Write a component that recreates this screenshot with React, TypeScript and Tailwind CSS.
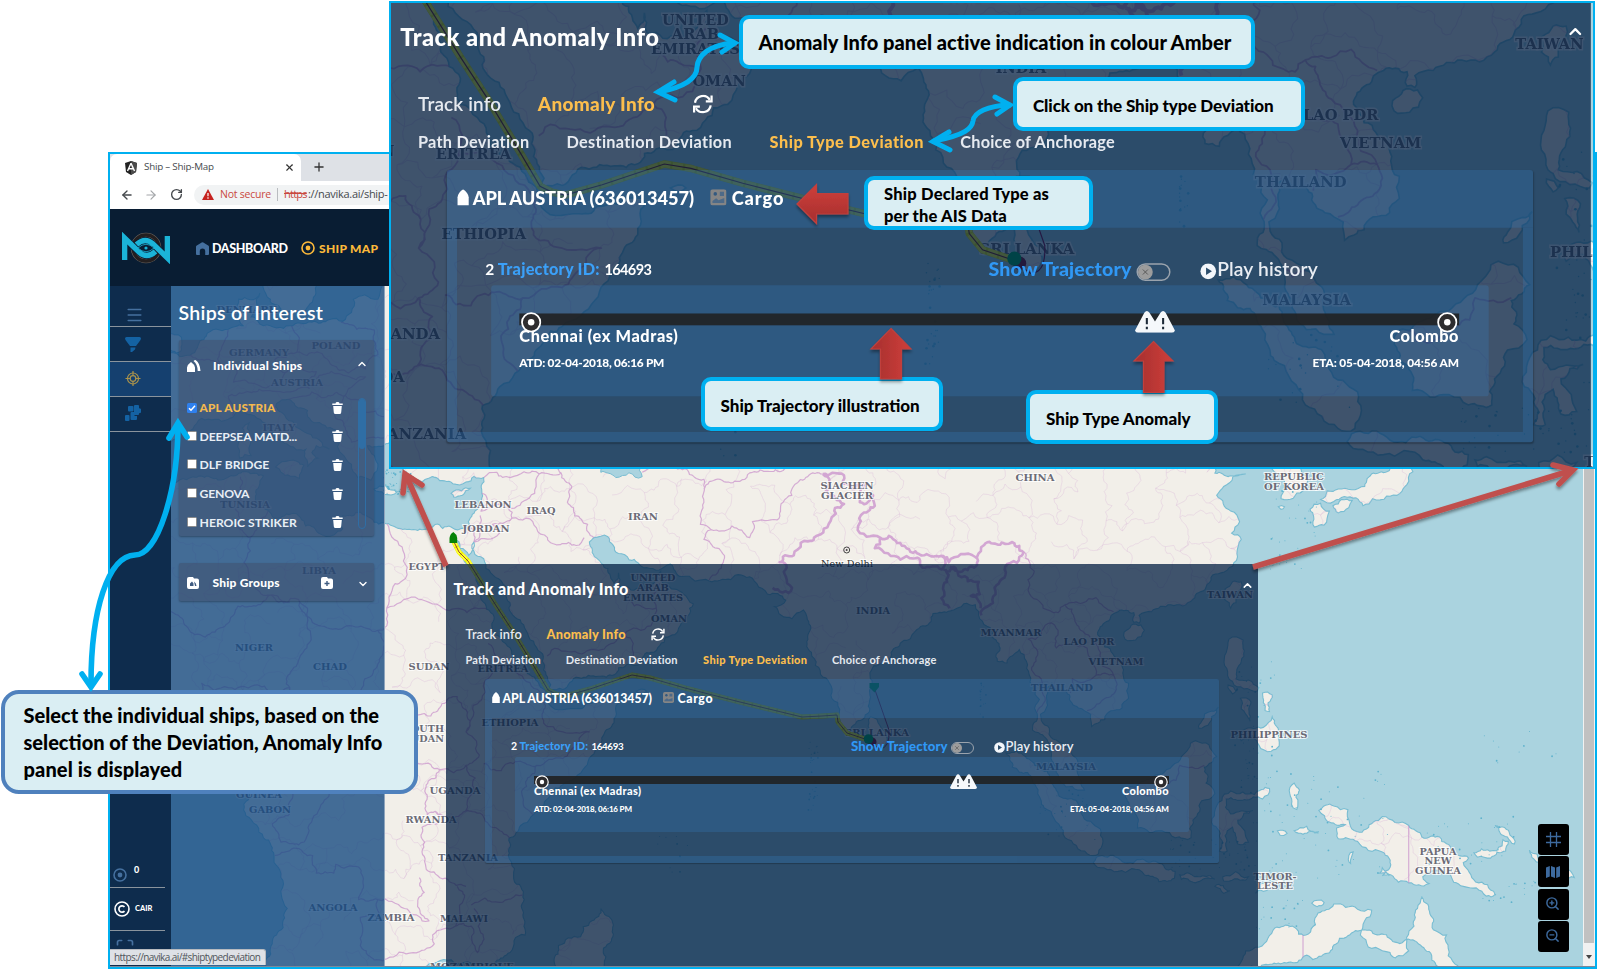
import { useId, useLayoutEffect, useRef, type ReactNode } from "react";
import {
  ArrowLeft,
  ArrowRight,
  ChevronDown,
  ChevronUp,
  Maximize,
  Menu,
  Plus,
  RotateCw,
  X,
  ZoomIn,
  ZoomOut,
} from "lucide-react";

/* ---------- text that is spaced out to a given width ---------- */

function Fit({ w, className = "", children }: { w: number; className?: string; children: string }) {
  const ref = useRef<HTMLSpanElement>(null);
  useLayoutEffect(() => {
    const el = ref.current;
    if (!el) return;
    el.style.letterSpacing = "0px";
    const natural = el.offsetWidth;
    el.style.letterSpacing = `${(w - natural) / Math.max(1, children.length - 1)}px`;
  }, [w, children]);
  return (
    <span className={`flex shrink-0 whitespace-nowrap ${className}`} style={{ width: w }}>
      <span ref={ref}>{children}</span>
    </span>
  );
}

/* ---------- map geometry (longitude, latitude) ---------- */

const px = (lon: number) => 166.5 + 8.81 * lon;
const py = (lat: number) => 802.5 - 8.83 * lat;

function random(seed: number) {
  let s = seed;
  return () => {
    s = (s * 16807) % 2147483647;
    return s / 2147483647;
  };
}

type Pt = [number, number];

function parse(src: string): Pt[] {
  return src
    .trim()
    .split(/\s+/)
    .map((p) => p.split(",").map(Number) as Pt);
}

function rough(points: Pt[], seed: number, amp = 0.2, min = 4): string {
  const rnd = random(seed);
  const out: string[] = [];
  const split = (a: Pt, b: Pt) => {
    const dx = b[0] - a[0];
    const dy = b[1] - a[1];
    const len = Math.hypot(dx, dy);
    if (len < min || len > 400) {
      out.push(`L${b[0].toFixed(1)} ${b[1].toFixed(1)}`);
      return;
    }
    const k = (rnd() - 0.5) * 2 * amp;
    const m: Pt = [(a[0] + b[0]) / 2 - dy * k, (a[1] + b[1]) / 2 + dx * k];
    split(a, m);
    split(m, b);
  };
  out.push(`M${points[0][0].toFixed(1)} ${points[0][1].toFixed(1)}`);
  for (let i = 1; i < points.length; i++) split(points[i - 1], points[i]);
  return out.join("");
}

const geo = (src: string, seed: number, closed: boolean, amp = 0.2) => {
  const pts = parse(src).map(([a, b]) => [px(a), py(b)] as Pt);
  if (closed) pts.push(pts[0]);
  return rough(pts, seed, amp) + (closed ? "Z" : "");
};

const MAINLAND =
  "-5,48 1.5,50.5 3.5,51.5 4.5,52.8 7,53.6 8.7,54 8.2,55.5 8.2,57 10.6,57.7 10.3,56.2 9.6,55 11,54 14,54 16.5,54.4 18.5,54.7 20,54.5 21,55.5 21.2,57 22.5,57.5 24,57 24.5,60 60,62 160,62 130,43 127.5,40 129.4,37 129,35.3 126.5,34.4 126.5,37 125,38 125,39.8 121.5,39 122,40.5 118,39 119,37.3 122.5,37.2 120,35.8 119.2,34.8 120.8,33 121.8,31.8 120.9,30.5 122,29.8 121.5,28.2 119.7,26 118,24.4 116.5,23 114,22.4 111.8,21.6 110.4,21.2 110.4,20.3 109.8,20.4 109.8,21.5 108,21.6 106.7,20.5 105.7,19 106.5,17.6 108.3,16 109.2,13.5 109.2,11.8 107.2,10.4 106.5,9.4 105,8.6 104.9,10 103.5,10.7 102.5,12.2 100.9,12.8 100.5,13.5 99.9,13 99.9,11.8 99.2,10 99.3,9.3 100.2,8.4 100.6,7.2 102,6.3 103.4,4.8 103.4,3.3 104.2,1.4 103.4,1.4 101.3,2.9 100.4,5 100.3,6.5 99,7.9 98.3,8.2 98.7,10.3 98.5,13 97.6,16 96.8,17.3 95.4,15.8 94.3,16 94.5,18 93.5,19.8 92.3,20.8 91.8,22.4 90.5,22.5 89,21.7 87,21.4 86.8,20.5 85,19.4 82.3,16.7 80.3,15.5 80.2,13.2 79.8,11.5 79.8,10.3 79,9.4 78.2,8.9 77.5,8.1 76.5,9 75.5,11.8 74.5,14.2 73.2,17 72.8,19 72.7,21 72.3,21.8 71,20.8 69,22.2 70.3,22.9 68.2,23.6 67,24.8 66.5,25.4 61.6,25.1 58.5,25.6 57.2,27 54.5,26.6 52.5,27.5 51.3,28.2 50.1,30.1 48.5,30 48,29.5 48.8,27.7 50.1,26.5 50.8,24.8 51.3,26 51.5,24.5 54,24.1 56.1,26.2 56.5,24.5 58.7,23.6 59.8,22.5 58.5,20.5 57.7,19 56,17.8 55,17 52.2,15.6 49,14.3 45,12.8 43.5,12.7 42.8,15 42.5,17 40.8,19.5 39.1,21.5 38.5,23.7 36.8,26 35,28.1 34.9,29.5 34.3,28 33.3,28.8 32.6,30 32.5,29.4 33.8,27.3 35.5,24 35.7,23 37.2,21 37.2,19 38.5,18 39.5,15.5 41.2,14.5 43,12.7 43.3,11.5 44.5,10.5 48,11.2 51.2,11.8 50.8,9.5 49,6.5 47.5,4 45,2 42.5,-0.5 40.2,-2.6 38.8,-6 39.5,-7.5 39.5,-9 40.6,-11 40.7,-15 39,-17 36,-19.5 11.8,-19.5 12,-16 13.7,-12 13.2,-8.8 12.2,-6 11,-4 9,-1.5 9.4,1 9.7,3.5 8.8,4.6 6.2,4.3 4.5,6.3 1,6 -4,5 -6,36 0,36 3,36.9 10,37.3 11,37 10.5,35.8 10.1,34 11.2,33.2 15.2,32.3 15.8,31.3 19,30.3 20,31 20,32.5 22,32.9 23.2,32.2 25.2,31.6 29,30.9 30.5,31.5 32.3,31.2 34.3,31.3 35,33 35.8,35 36,36.8 34,36.3 32.5,36.1 30.6,36.8 29,36.3 27.4,37 26.3,39.3 26.2,40.1 26,40.8 23.8,40.3 22.8,40.4 24,38 23.2,36.5 21.7,36.8 21,38.3 19.4,40.3 19.5,42 17,43 14.5,45.2 13.5,45.6 12.4,44.8 13.6,43.5 16,41.8 18.5,40 17,40.4 16.5,39.6 17.2,39 16,38 15.8,40 12.3,41.7 10.3,43.5 8.8,44.4 7,43.4 4,43.5 3,42.3 0.5,40.8 -0.3,39 -5,36.5";

const ISLANDS = [
  "-4,50 1.4,51 1.7,52.7 0.2,53.3 -2,56 -4,57",
  "11.5,60 11,58.8 12.7,56.3 13,55.4 14.3,55.5 16.3,56.5 17,58.5 19,60",
  "8.3,39 9.6,39.3 9.6,41 8.3,41",
  "8.7,41.5 9.4,41.7 9.4,43 8.6,42.4",
  "12.4,38 15.6,38.2 15.1,36.7 13,37.4",
  "23.5,35.5 26.2,35.2 24.7,34.9",
  "32.3,35 33.5,35.3 34.5,35.6 33.6,34.8 32.6,34.6",
  "79.9,9.7 81,8.7 81.8,7.3 81.4,6.3 80.4,5.95 79.9,7 79.8,8.3",
  "53.3,12.6 54.5,12.6 54,12.3",
  "49.3,-12 50.5,-15.7 49.6,-16.5 48.5,-20 43.5,-21 44,-18 44.5,-16.2 47,-15.2 48.3,-13.4",
  "95.3,5.6 97.5,5.2 100.3,2.6 103,0.3 103.8,-1.2 106,-3 105.8,-5.8 104.5,-5.8 102,-4 100.4,-1 98.7,1.8 96,4",
  "105.2,-6.8 106.2,-6 108.5,-6.7 110.8,-6.4 112.7,-6.9 114.5,-7.8 114.4,-8.6 111,-8.2 108,-7.8 106.4,-7.4",
  "115,-8.2 116.7,-8.4 118.5,-8.3 119,-8.7 117,-9 115.2,-8.7",
  "119.9,-8.4 122.8,-8.4 122.5,-8.8 120,-8.9",
  "123.6,-10.3 125,-9 127.2,-8.4 126,-9.3",
  "119,-9.5 120.7,-10 120,-10.3",
  "109,1.5 110,1.7 111.3,2.6 113,3.2 115.2,5.2 116.8,7 119.2,5.2 117.8,4 118,2.2 119,1 117.5,0.2 116.5,-2 116.3,-4 114.5,-4 113,-3.2 110.2,-2.9 109.9,-1 109,0.4",
  "119.8,0.2 120.8,1.3 123.5,0.9 125.2,1.6 124.4,0.4 120.3,0.4 120.8,-1.3 123.3,-0.9 121.6,-2 122.4,-3.2 122.8,-4.5 121.6,-4.7 121,-2.8 120.4,-3.2 120.4,-5.5 119.5,-5.5 119.6,-3.5 118.8,-2.6",
  "127.5,1 128,2.2 128.6,1.4 128.2,0.6 128.3,-0.8 127.7,-0.2",
  "128,-3.2 130.8,-3.3 129,-3.6",
  "126.1,-3.2 127.2,-3.5 126.4,-3.7",
  "130.8,-0.9 132.5,-0.4 134.1,-0.8 134.3,-2.4 135.1,-3.3 137,-2.2 138,-1.6 141,-2.6 144.5,-3.9 146,-5.5 147.8,-6.3 147.2,-6.8 148.6,-9 150.8,-10.4 149.8,-10.6 147.2,-9.5 145.5,-8 143.8,-7.7 142.6,-8.4 143.3,-9.2 141,-9.1 139,-8.2 138,-8.3 138.9,-7.3 138,-5.6 135.2,-4.4 133,-4.1 132.8,-2.9 133.8,-2.5 132,-2.2",
  "137.7,-8 138.8,-8.3 138,-7.4",
  "134.2,-6 134.7,-5.6 134.4,-6.9",
  "148.4,-5.7 150.2,-5.5 151.6,-4.9 151.7,-4.2 152.3,-4.4 152,-5.5 150.3,-6.3 148.8,-6.2",
  "150.8,-2.6 152.5,-3.7 153,-4.7 152.2,-3.9",
  "154.7,-5.4 155.9,-6.8 155.2,-6.4",
  "157,-7.4 159.8,-8.5 157.5,-8",
  "120.2,-20 119,-19.5 122,-18 122.5,-16.8 124,-16.4 125.8,-14.2 127.8,-14 128.5,-14.9 129.6,-14.9 130.7,-12.5 132.5,-11.5 135.2,-12.1 136.8,-12.2 136,-13.4 135.5,-15 138,-16.8 139.5,-17.6 141,-16.8 141.6,-14 142,-12 142.5,-10.7 143.4,-12.6 143.8,-14.4 145.3,-15 146,-18 148,-20",
  "130,-11.4 131.4,-11.3 130.6,-11.8",
  "120.6,18.5 122.2,18.4 122,16 121.4,14 124,13 123.8,12.6 121,13.7 120.6,14 120.1,15.5 120.3,17",
  "122,7 122.2,8.2 124.5,8.5 125.5,9.7 126.4,8 126.3,6.4 125.4,5.8 124,6.5 123.4,7.5",
  "121.9,11.8 123.1,11.4 123,9.2 122.5,10 122,10.6",
  "124.4,12.4 125.5,12.2 125.2,10.3 124.7,10.4 124.5,11.3",
  "117.2,8.4 119.4,10.8 119.2,10.2",
  "120.5,13.3 121.4,12.6 121,12.3",
  "120.1,23 121,25 122,25 121.4,23.5 120.8,22",
  "108.7,19.3 110.6,20.1 111,19.5 110,18.4 108.8,18.5",
  "129.8,33.2 131,33.9 132,33 131.4,31.4 130.3,31.2 130.2,32.4",
  "132.4,33.6 134.6,34.2 134.2,33.4 133,32.8",
  "131,34.3 133,35.5 136,35.8 137,37.3 138.8,37.6 141,39 140.8,36 140,35 138.5,34.7 136.9,34.4 135.8,33.6 135,34.5 132.5,34.1",
  "126.2,33.5 126.9,33.5 126.5,33.2",
];

const BORDERS = [
  "36,36.8 39,36.8 42.3,37.2 44.8,37.3 46,35.8 45.5,34 47.8,31.5 48.5,30",
  "35.8,35 36.4,34.4 35.7,33 38.8,33.4 41.2,34.5 42.3,37.2",
  "35.6,32.5 35.5,31.5 35,29.5 37.8,30.5 37,31.5 39.2,32.2 38.8,33.4",
  "39.2,32.2 42,31.1 44.7,29.2 46.5,29.1 47.4,30",
  "34.2,31.3 34.9,29.5",
  "25,31.6 25,20",
  "25,22 31.4,22 36.8,22",
  "25,20 24,19.5 24,15.7 22.5,14 22,12.6 23.5,10 26,7 27.5,5 30,4.3 31,3.7",
  "24,10 27,9.6 30,9.8 33,12 34,10.5 34,8 35.5,5.4 34,4.2 31,3.7",
  "36.5,18 37,15 36.2,12.5 34.8,11 34,8",
  "37,15 40,14.5 42.4,12.5 43,11 42.8,9 45,8 48,8 45,5 42,4.2 38,3.6 36,4.4",
  "42,4.2 41,2.8 41,-0.8 41.6,-1.7",
  "34,4.2 34.8,1 33.9,-1 37.6,-3 39.2,-4.7",
  "33.9,-1 30.5,-1 29.6,-1.4 29.6,0.6 31,3.7",
  "30.5,-1 30.8,-2.4 29,-2.8 29.3,-4.5 30.8,-8.3 32.9,-9.4 34,-9.5",
  "34.6,-11.6 37.8,-11.3 40.4,-10.5",
  "28.7,-8.5 28.5,-11.8 29.8,-13.4 29,-13.4 27,-12 24,-11 24,-13 22,-13 22,-16.2 25,-17.7",
  "33,-9.5 33.3,-12.5 32.8,-14 30.2,-15 30.4,-16 28,-17 25,-17.7",
  "32.8,-14 34.6,-14 35.3,-17 35.8,-16 34.9,-12",
  "12.3,-6 16.6,-6 17,-8 19,-8 19.2,-7 21.8,-7.3 21.8,-11 24,-11",
  "9.8,2.2 13.3,2.2 16,2.2 18.5,4.5 19,5 22.5,4 27.5,5",
  "13.3,2.2 13.8,-1.5 12,-2.4 13,-4.5 15,-4.8 16.2,-2.5 17.8,0 18.5,4.5",
  "8.6,4.8 10,7 12,7.5 14.2,11.5 14,13 10,13.3 7,13 4,13.5 3.6,11.7 2.7,6.4",
  "14.2,10 15.5,7.7 19,9 22.5,11",
  "14,13 13.6,14 15.5,17 16,22 15,23 24,19.5",
  "15,23 11.8,23.5 5.5,19.3 3.2,19 0,21.5",
  "11.8,23.5 10,24.5 9.5,30 11.5,33",
  "9.5,30 7.8,33.2 8.4,36.9",
  "14,22.7 11.8,23.5",
  "43.2,16.6 44.5,17.4 47.5,17 52,19 55,20 55.6,22 52.5,22.9 51.5,24",
  "52,19 53,16.6",
  "55.6,22 56,24.8",
  "54,37.4 57,38.2 61,36.6 61,34 60.6,31.5 61.8,30.9 61,29.8 63.2,27.2 61.6,25.2",
  "61.8,30.9 66.2,30 66.5,31.8 69.3,32 70,34 71.3,36 74.5,37.2",
  "61,35.5 64.5,36.4 66.5,37.4 70,37.6 71.5,38",
  "44.8,37.3 44.5,39 47,39.2 48.8,38.4",
  "97.5,28.3 97.8,24 98.8,23 99.5,22 101.2,21.5 102,22.4 104,22.6 105.5,23.2 107.5,21.6",
  "100.1,20.3 97.8,18.5 98.7,16 98.2,15 99.4,12.5 98.8,10.2",
  "100.1,20.3 101.2,19.5 101,17.5 102.5,18 104.5,17.5 105.5,14.4 107.5,14.4 106,17 104,19.4 103,21 102,22.4",
  "105.5,14.4 102.8,14 102.6,12.4",
  "107.5,14.4 107.5,12.3 106,11.3 104.5,10.4",
  "100.2,6.5 101,5.8 102,6.3",
  "109.6,2 110.5,0.9 112.5,1.4 114.6,2.5 115,4.2 117.8,4.2",
  "125,-8.9 125.2,-9.5",
  "6.2,49.5 6,51 7,53.5",
  "14.2,54 14.8,51 12.3,50.2 13.5,48.7 13,47.5 9.6,47.5 7.6,47.6 8,49 6.2,49.5 2.5,51",
  "14.8,51 18.8,49.5 22.6,49.1 24,50.7 23.6,53.5 19.8,54.4",
  "13.5,48.7 17,48.8 16.2,46.9 13.7,46.5 10.5,46.8 7,46 7.5,43.8",
  "17,48 20.5,48.3 22.6,48.2 20.3,46.1 16.5,46.5 13.7,45.6",
  "20.3,46.1 19,44.9 19.2,43.5 20.5,42 21,40.8 24.7,41.3",
  "20.3,46.1 22.6,44.2 24.7,43.7",
];

const STRAIGHT = ["141,-2.6 141,-9.1", "129,-15 129,-20", "138,-16.8 138,-20"];

const THICK = [
  "74.5,37.2 77.8,35.5 79.4,36.2 78.6,34.8 78.7,34 80.2,34.8 80.4,33.6 78.8,32.5 78.5,31.3 81,30 80.4,28.8 83.3,27.5 85.8,26.6 88,26.4 88.2,27.9 86,28 84,28.8 82,30.2 81,30",
  "74.5,37.2 74.8,35.2 76.9,33.8 75.5,32.3 74.6,31 73.5,30 71.2,28 69.6,27.2 70.3,25.6 71,24.3 68.8,24.3",
  "88,27.9 88.8,27.2 91.8,27.8 92,26.9 88.9,26.7",
  "92,27.8 94.4,29.2 96,29.5 97.3,28.3 95.2,26.7 94.2,24.6 93.2,22.2 92.5,21.2",
  "88.2,26.4 88.2,24.6 88.9,22",
  "88.4,26.4 89.9,25.7 92.2,25 92.3,23.6 91.3,23.4 92.4,22",
];

const LAND = [MAINLAND, ...ISLANDS].map((s, i) => geo(s, 97 + i * 31, true, 0.2)).join("");
const BORDER_D =
  BORDERS.map((s, i) => geo(s, 411 + i * 17, false, 0.2)).join("") + STRAIGHT.map((s) => geo(s, 5, false, 0)).join("");
const THICK_D = THICK.map((s, i) => geo(s, 733 + i * 13, false, 0.28)).join("");
const CASPIAN = geo("49,38.4 49.3,37.4 51,36.8 54,36.9 53.9,40 49,40", 55, true);

const PROVINCES = (() => {
  const rnd = random(4242);
  const step = 27;
  const cols = 54;
  const rows = 26;
  const v: Pt[][] = [];
  for (let r = 0; r <= rows; r++) {
    v.push([]);
    for (let c = 0; c <= cols; c++) v[r].push([160 + c * step + (rnd() - 0.5) * 22, 280 + r * step + (rnd() - 0.5) * 22]);
  }
  let d = "";
  for (let r = 0; r < rows; r++)
    for (let c = 0; c < cols; c++) {
      const australia = r > 21 && c > 36;
      if (rnd() > 0.36 && !australia) d += rough([v[r][c], v[r][c + 1]], 900 + r * 61 + c, 0.26, 5);
      if (rnd() > 0.36 && !australia) d += rough([v[r][c], v[r + 1][c]], 5900 + r * 61 + c, 0.26, 5);
    }
  return d;
})();

const SPECKS: Pt[] = (() => {
  const rnd = random(777);
  const areas: [number, number, number, number, number][] = [
    [1250, 770, 140, 110, 60],
    [1270, 490, 50, 80, 30],
    [1235, 660, 40, 130, 45],
    [1425, 815, 90, 50, 25],
    [384, 470, 30, 25, 50],
    [808, 740, 10, 70, 30],
    [980, 680, 8, 40, 16],
    [1480, 725, 90, 40, 10],
    [1480, 880, 80, 25, 20],
    [1160, 840, 90, 30, 40],
    [1040, 790, 60, 50, 24],
    [1255, 900, 60, 30, 20],
    [640, 835, 50, 40, 10],
  ];
  return areas.flatMap(([x, y, w, h, n]) => Array.from({ length: n }, () => [x + rnd() * w, y + rnd() * h] as Pt));
})();

const LABELS: [string, number, number, number][] = [
  ["DENMARK", 247, 309, 61],
  ["POLAND", 336, 345, 49],
  ["GERMANY", 259, 352, 60],
  ["AUSTRIA", 297, 382, 52],
  ["ITALY", 279, 427, 33],
  ["TUNISIA", 245, 504, 50],
  ["LIBYA", 319, 570, 34],
  ["NIGER", 254, 647, 38],
  ["CHAD", 330, 666, 34],
  ["GUINEA", 259, 794, 46],
  ["GABON", 270, 809, 42],
  ["ANGOLA", 333, 907, 49],
  ["ZAMBIA", 391, 917, 47],
  ["RWANDA", 431, 819, 51],
  ["UGANDA", 455, 790, 51],
  ["SOUTH", 424, 728, 40],
  ["SUDAN", 424, 738, 40],
  ["SUDAN", 429, 666, 41],
  ["EGYPT", 427, 566, 37],
  ["JORDAN", 486, 528, 47],
  ["LEBANON", 483, 504, 57],
  ["IRAQ", 541, 510, 29],
  ["IRAN", 643, 516, 30],
  ["SIACHEN", 847, 485, 53],
  ["GLACIER", 847, 495, 52],
  ["CHINA", 1035, 477, 39],
  ["UNITED", 653, 577.5, 45],
  ["ARAB", 653, 587, 32],
  ["EMIRATES", 653, 597, 60],
  ["OMAN", 669, 618.5, 36],
  ["INDIA", 873, 610, 34],
  ["ERITREA", 503, 668, 51],
  ["ETHIOPIA", 510, 722, 57],
  ["SRI LANKA", 877, 732.5, 64],
  ["MYANMAR", 1011, 632, 61],
  ["LAO PDR", 1089, 641.5, 51],
  ["VIETNAM", 1116, 661, 55],
  ["THAILAND", 1062, 687, 62],
  ["MALAYSIA", 1066, 766.5, 60],
  ["TAIWAN", 1230, 594, 46],
  ["PHILIPPINES", 1269, 734, 77],
  ["REPUBLIC", 1294, 476, 60],
  ["OF KOREA", 1294, 486, 60],
  ["PAPUA", 1438, 851, 37],
  ["NEW", 1438, 860, 27],
  ["GUINEA", 1438, 870, 46],
  ["TIMOR-", 1275, 876, 43],
  ["LESTE", 1275, 885, 36],
  ["TANZANIA", 468, 857.5, 60],
  ["MALAWI", 464, 918.5, 48],
  ["MOZAMBIQUE", 472, 966, 84],
];

const TRACK =
  "M453 540L459 552L468 561L495 604L512 630L535 668L548 690L556 694L565 696L590 689L632 675L650 678L685 688L740 702L802 717L822 716L837 715L838 722L847 733L868 740";

function WorldMap() {
  const id = useId();
  return (
    <svg className="block h-[970px] w-[1613px]" viewBox="0 0 1613 970">
      <defs>
        <clipPath id={id}>
          <path d={LAND} />
        </clipPath>
      </defs>
      <rect width="1613" height="970" fill="#aad3df" />
      <path d={LAND} fill="#f2efe9" stroke="#79bdd2" strokeWidth="1.1" />
      <g clipPath={`url(#${id})`} fill="none" strokeLinejoin="round">
        <path d={PROVINCES} stroke="#d9b3d9" strokeWidth="0.7" opacity="0.45" />
        <path d={BORDER_D} stroke="#cb95cc" strokeWidth="1.2" opacity="0.75" />
        <path d={THICK_D} stroke="#cf9fd0" strokeWidth="2.6" opacity="0.9" />
      </g>
      <path d={CASPIAN} fill="#aad3df" stroke="#79bdd2" />
      <g fill="#5fb2cc">
        {SPECKS.map(([x, y], i) => (
          <circle key={i} cx={x} cy={y} r={i % 3 ? 0.5 : 0.9} />
        ))}
      </g>
      <g
        fontFamily="'DejaVu Serif', serif"
        fontWeight="700"
        fontSize="9.6"
        fill="#6b6b76"
        stroke="#ffffff"
        strokeOpacity="0.75"
        strokeWidth="2"
        paintOrder="stroke"
        textAnchor="middle"
      >
        {LABELS.map(([t, x, y, w]) => (
          <text key={`${t}${x}${y}`} x={x} y={y + 3.5} textLength={w} lengthAdjust="spacingAndGlyphs">
            {t}
          </text>
        ))}
        <text x="847" y="566.5" fontWeight="400" fill="#333333" textLength="52">
          New Delhi
        </text>
      </g>
      <circle cx="846.7" cy="550" r="3" fill="none" stroke="#444" />
      <circle cx="846.7" cy="550" r="1" fill="#444" />
      <path d={TRACK} fill="none" stroke="#e6ee00" strokeWidth="5" strokeLinejoin="round" />
      <path d={TRACK} fill="none" stroke="#ffff30" strokeWidth="4.4" strokeDasharray="7 1.5" />
      <path d={TRACK} fill="none" stroke="#7a1f1f" strokeWidth="0.8" />
      <path d="M874 687L889 730Q890 748 880 749L868 741" fill="none" stroke="#8a1048" strokeWidth="0.8" />
      <path d="M449.5 543v-5q.5-4 3.8-6q3.3 2 3.9 6v5z" fill="#078307" />
      <circle cx="872" cy="742" r="4.5" fill="#8a1030" />
      <circle cx="868.5" cy="739" r="4.8" fill="#00b058" />
      <path d="M869.5 683h9.500v4l-4.500 5.500l-5-5z" fill="#00b058" />
    </svg>
  );
}

/* ---------- small drawings ---------- */

function ShipGlyph() {
  return (
    <svg className="h-[11px] w-2 shrink-0" viewBox="0 0 8 11">
      <path d="M.2 11V5.500Q.6 2.200 4 0Q7.400 2.200 7.800 5.500V11z" fill="#fff" />
    </svg>
  );
}

function RefreshGlyph() {
  return (
    <svg className="h-[13px] w-[14px] shrink-0" viewBox="0 0 14 13" fill="none" stroke="#fff" strokeWidth="1.5">
      <path d="M1.700 5.600A5.400 5.400 0 0 1 11.700 3.700M12.300 7.400A5.400 5.400 0 0 1 2.300 9.300" />
      <path d="M12.900.8V4.700H9M1.100 12.200V8.300H5" />
    </svg>
  );
}

function TargetGlyph({ className, ring, dot }: { className: string; ring: string; dot: string }) {
  return (
    <svg className={`shrink-0 ${className}`} viewBox="0 0 14 14">
      <circle cx="7" cy="7" r="6" fill="none" stroke={ring} strokeWidth="1.6" />
      <circle cx="7" cy="7" r="2.4" fill={dot} />
    </svg>
  );
}

function TrashGlyph() {
  return (
    <svg className="mb-[1px] h-3 w-[11px] shrink-0" viewBox="0 0 11 12" fill="#fff">
      <path d="M3.500 1.400Q3.500 0 5.500 0T7.500 1.400H10.700V3.100H.3V1.400zM1.200 3.900h8.600L9.200 10.500Q9 12 7.600 12H3.400Q2 12 1.800 10.500z" />
    </svg>
  );
}

function StopGlyph() {
  return (
    <svg className="h-[14px] w-[14px]" viewBox="0 0 14 14">
      <circle cx="7" cy="7" r="6.2" fill="#2e2d2f" stroke="#fff" strokeWidth="1.2" />
      <circle cx="7" cy="7" r="2.2" fill="#fff" />
    </svg>
  );
}

/* ---------- Track and Anomaly panel ---------- */

function AnomalyPanel() {
  return (
    <section className="flex h-[402px] w-[812px] flex-col bg-[rgba(0,28,65,0.74)] pl-[7.500px] font-[Lato,sans-serif] text-white">
      <div className="flex h-[50px] items-center justify-between pr-[4.500px]">
        <Fit w={175} className="text-[16px] font-black">
          Track and Anomaly Info
        </Fit>
        <ChevronUp className="mb-[7px] h-[13px] w-[13px]" strokeWidth={2.8} />
      </div>
      <div className="mt-[11.500px] flex h-[18px] items-center gap-[25px] pl-[12px] text-[12.800px]">
        <Fit w={56} className="font-semibold text-[#e6eaf0]">
          Track info
        </Fit>
        <Fit w={79.5} className="font-black text-[#fcbe4d]">
          Anomaly Info
        </Fit>
        <RefreshGlyph />
      </div>
      <div className="mt-[8px] flex h-[18px] items-center gap-[24.800px] pl-[12px] text-[11px] font-bold text-[#e6eaf0]">
        <Fit w={75.5}>Path Deviation</Fit>
        <Fit w={112.5}>Destination Deviation</Fit>
        <Fit w={104} className="font-black text-[#fcbe4d]">
          Ship Type Deviation
        </Fit>
        <Fit w={104}>Choice of Anchorage</Fit>
      </div>
      <div className="mt-[9.500px] ml-[31.500px] w-[734px] rounded-[2px] shadow-[0_1px_1px_rgba(0,0,0,0.25)]">
        <div className="flex h-[39px] items-center rounded-t-[2px] bg-[rgba(55,145,225,0.2)] pt-[1.500px] pl-[7px] text-[12.300px] font-black">
          <span className="mb-[3px] flex">
            <ShipGlyph />
          </span>
          <Fit w={150} className="ml-[2.500px]">
            APL AUSTRIA (636013457)
          </Fit>
          <svg className="mb-[4px] ml-[10.500px] h-[11px] w-[11px] shrink-0" viewBox="0 0 11 11">
            <rect width="11" height="11" rx="1.8" fill="#858585" />
            <circle cx="3.4" cy="3.2" r="1.2" fill="#33597f" />
            <path d="M6.500 1.800h2.800v2.800H6.500zM1.500 9.300V8L4 6.200l1.600 1.300L9.500 6v3.300z" fill="#4d6a88" />
          </svg>
          <Fit w={35.5} className="ml-[3.500px]">
            Cargo
          </Fit>
        </div>
        <div className="h-[145px] rounded-b-[2px] border-x-[7.500px] border-b-[7px] border-[rgba(55,145,225,0.2)]">
          <div className="flex h-[39px] items-end pb-[2.500px] pl-[19px]">
            <div className="flex h-[16px] w-[340px] items-center text-[10.500px]">
              <Fit w={6} className="font-bold">
                2
              </Fit>
              <Fit w={69} className="ml-[2.500px] text-[11px] font-black text-[#3ba0f8]">
                Trajectory ID:
              </Fit>
              <Fit w={32} className="ml-[3px] text-[9.800px] font-bold">
                164693
              </Fit>
            </div>
            <div className="flex h-[16px] items-center text-[13px]">
              <Fit w={96.5} className="text-[13.200px] font-black text-[#3098f5]">
                Show Trajectory
              </Fit>
              <span className="mt-[2px] ml-[3.500px] flex h-[12px] w-[23px] items-center rounded-full border border-[#9aa3ad]">
                <span className="flex h-[10px] w-[10px] items-center justify-center rounded-full bg-[#9c9c9c]">
                  <X className="h-[6px] w-[6px] text-[#555]" strokeWidth={2.5} />
                </span>
              </span>
              <svg className="mt-[1px] ml-[20px] h-[11px] w-[11px] shrink-0" viewBox="0 0 11 11">
                <circle cx="5.5" cy="5.5" r="5.3" fill="#f3f6fa" />
                <path d="M4 3l4 2.500L4 8z" fill="#2c4d6b" />
              </svg>
              <Fit w={68} className="ml-[0.500px] font-semibold text-[#e9edf3]">
                Play history
              </Fit>
            </div>
          </div>
          <div className="mr-[23px] ml-[23px] h-[75px] rounded-[2px] bg-[rgba(55,145,225,0.2)] pt-[19px] pr-[20px] pl-[19px]">
            <div className="relative h-[8px] bg-[rgba(32,32,32,0.88)]">
              <span className="absolute top-[-1.500px] left-[1px]">
                <StopGlyph />
              </span>
              <span className="absolute top-[-1.500px] right-[1px]">
                <StopGlyph />
              </span>
              <svg className="absolute top-[-2.500px] left-[415.500px] h-[15px] w-[27px]" viewBox="0 0 27 15">
                <path
                  d="M0 13.500L6.300 1.500Q8 -.8 9.800 1.500L13.500 7.500L17.200 1.500Q19 -.8 20.700 1.500L27 13.500Q26.500 15 25 15H2Q.5 15 0 13.500z"
                  fill="#f5f8fb"
                />
                <path d="M8 5v4.300M8 11v1.700M19 5v4.300M19 11v1.700" stroke="#1d2a38" strokeWidth="1.4" />
              </svg>
            </div>
            <div className="mt-[0.500px] flex h-[14px] items-center justify-between text-[11px] font-black">
              <Fit w={107.5}>Chennai (ex Madras)</Fit>
              <Fit w={47}>Colombo</Fit>
            </div>
            <div className="mt-[4.500px] flex h-[11px] items-center justify-between text-[8px] font-black">
              <Fit w={98}>ATD: 02-04-2018, 06:16 PM</Fit>
              <Fit w={99}>ETA: 05-04-2018, 04:56 AM</Fit>
            </div>
          </div>
        </div>
      </div>
    </section>
  );
}

/* ---------- browser window ---------- */

function BrowserBar() {
  return (
    <div className="w-full shrink-0 font-['Open_Sans','Noto_Sans',sans-serif] text-[#45494d]">
      <div className="flex h-[27px] bg-[#dee1e6]">
        <div className="flex w-[191px] items-center rounded-t-[7px] bg-white pl-[15px]">
          <svg className="h-[14px] w-3" viewBox="0 0 12 14">
            <path d="M6 0l6 2-1 9-5 3-5-3L0 2z" fill="#222" />
            <path d="M6 0l6 2-1 9-5 3z" fill="#4b4b4b" />
            <path d="M6 2.200L2.500 10M6 2.200L9.500 10M4 7.800h4" stroke="#fff" strokeWidth="1.4" fill="none" />
          </svg>
          <Fit w={70} className="mb-px ml-[7px] text-[9.800px]">
            Ship – Ship-Map
          </Fit>
          <X className="ml-[70px] h-[11px] w-[11px] text-[#333]" strokeWidth={2.5} />
        </div>
        <Plus className="mt-[6px] ml-[11px] h-[14px] w-[14px] text-[#333]" strokeWidth={2.2} />
      </div>
      <div className="flex h-[28px] items-center bg-white pl-[10px] text-[11px]">
        <ArrowLeft className="mb-px h-[14px] w-[14px]" strokeWidth={2.3} />
        <ArrowRight className="mb-px ml-[10px] h-[14px] w-[14px] text-[#a3a6a9]" strokeWidth={2} />
        <RotateCw className="mb-px ml-[12px] h-[13px] w-[13px]" strokeWidth={2.5} />
        <div className="mb-px ml-[11px] flex h-[20px] w-[300px] items-center rounded-full bg-[#f1f3f4] pl-[8px]">
          <svg className="h-[11px] w-3" viewBox="0 0 12 11">
            <path d="M6 0l6 11H0z" fill="#c5221f" />
            <path d="M6 4v3.300M6 8.300v1.400" stroke="#fff" strokeWidth="1.2" />
          </svg>
          <Fit w={51} className="ml-[6px] text-[10.500px] text-[#c9493f]">
            Not secure
          </Fit>
          <span className="mx-[6px] h-[13px] w-px bg-[#b9bcc0]" />
          <Fit w={24} className="text-[#c9493f] line-through">
            https
          </Fit>
          <Fit w={80}>://navika.ai/ship-</Fit>
        </div>
      </div>
    </div>
  );
}

function AppHeader() {
  return (
    <div className="flex h-[77px] w-full shrink-0 items-center bg-[#091d33] pl-[12px] font-[Lato,sans-serif] text-[12.500px] font-black text-white">
      <svg className="h-[32px] w-[48px] shrink-0" viewBox="0 0 48 32" fill="none">
        <circle cx="24" cy="16" r="13" stroke="#6a6560" strokeWidth="4.6" />
        <circle cx="24" cy="16" r="13" stroke="#231f20" strokeWidth="3.4" />
        <path d="M2.600 28V6.500L17.500 20.500Q25 27 33.500 19.500" stroke="#091d33" strokeWidth="6.8" />
        <path d="M45.400 4V25.500L30.500 11.500Q23 5 14.500 12.500" stroke="#091d33" strokeWidth="6.8" />
        <path d="M2.600 28V6L17.500 20.500Q25 27 33.500 19.500" stroke="#1bb4d8" strokeWidth="5.4" />
        <path d="M45.400 4V26L30.500 11.500Q23 5 14.500 12.500" stroke="#1bb4d8" strokeWidth="5.4" />
        <path d="M16 16q8-7.500 16 0q-8 7.500-16 0z" fill="#091d33" stroke="#1bb4d8" strokeWidth=".8" />
        <circle cx="24" cy="16" r="1.6" fill="#1bb4d8" />
      </svg>
      <svg className="mt-[2px] ml-[26px] h-[13px] w-[13px] shrink-0" viewBox="0 0 13 13">
        <path d="M0 4.800Q0 4 .8 3.500L5.700.4Q6.500 0 7.300.4l4.900 3.100Q13 4 13 4.800V12Q13 13 12 13H9.200V8.800Q9 6.600 6.500 6.600T3.800 8.800V13H1Q0 13 0 12z" fill="#45709f" />
      </svg>
      <Fit w={76} className="mt-[3px] ml-[3px]">
        DASHBOARD
      </Fit>
      <TargetGlyph className="mt-[1px] ml-[13px] h-[14px] w-[14px]" ring="#fcb93a" dot="#fcb93a" />
      <Fit w={59} className="mt-[3px] ml-[4px] text-[12px] text-[#fcb93a]">
        SHIP MAP
      </Fit>
    </div>
  );
}

function RailItem({ active, h, children }: { active?: boolean; h: string; children: ReactNode }) {
  return (
    <div
      className={`flex items-center border-b border-[#8a949d] pl-[15px] text-[#45709f] ${h} ${active ? "bg-[#15406f]" : ""}`}
    >
      {children}
    </div>
  );
}

function Rail() {
  return (
    <nav className="flex h-full w-[60.500px] shrink-0 flex-col bg-[#0e2c4d] font-[Lato,sans-serif]">
      <RailItem h="h-[41px] pt-[17px]">
        <Menu className="h-[20px] w-[19px]" strokeWidth={1.8} />
      </RailItem>
      <RailItem h="h-[35px]">
        <svg className="h-[15px] w-4" viewBox="0 0 16 15" fill="#1462a3">
          <path d="M1.500 0h13Q16 0 16 1.500L15.500 3 11 9H5L.5 3 0 1.500Q0 0 1.500 0zM5.500 10.500h5L10 12.500 7 15H5.500z" />
        </svg>
      </RailItem>
      <RailItem h="h-[35px]" active>
        <svg className="mb-[2px] h-[15px] w-4" viewBox="0 0 15 15" fill="none" stroke="#a9924b" strokeWidth="1.2">
          <circle cx="7.5" cy="7.5" r="5.5" />
          <circle cx="7.5" cy="7.5" r="2.8" />
          <path d="M7.500 0v5M7.500 10v5M0 7.500h5M10 7.500h5" />
        </svg>
      </RailItem>
      <RailItem h="h-[35px]">
        <svg className="mb-[2px] h-4 w-4" viewBox="0 0 16 16" fill="#1462a3">
          <rect x="3" y="1" width="5.5" height="5.5" rx="1" />
          <rect x="0" y="10" width="4.5" height="6" rx="1" />
          <path d="M9 1Q9 0 10 0h3Q14 0 14 1v2.200a2.200 2.200 0 1 1 0 5v1Q14 10 13 10h-3Q9 10 9 9zM5.500 8Q5.500 7 6.500 7H9.500v4H12v3q0 1-1 1H6.500q-1 0-1-1z" />
        </svg>
      </RailItem>
      <div className="flex-1" />
      <div className="flex h-[25px] w-[55px] items-start border-b border-[#8a949d] pl-[3px]">
        <TargetGlyph className="mt-[5px] h-[14px] w-[14px]" ring="#45709f" dot="#45709f" />
        <span className="ml-[7px] text-[9px] font-black text-white">0</span>
      </div>
      <div className="flex h-[43px] w-[55px] items-center border-b border-[#8a949d] pl-[4px] text-white">
        <svg className="h-4 w-4 shrink-0" viewBox="0 0 16 16" fill="none" stroke="#fff">
          <circle cx="8" cy="8" r="7" strokeWidth="1.6" />
          <path d="M10.500 5.900a3.200 3.200 0 1 0 0 4.200" strokeWidth="1.7" />
        </svg>
        <Fit w={17} className="ml-[5px] text-[7.500px] font-black">
          CAIR
        </Fit>
      </div>
      <div className="h-[36px] pt-[7px] pl-[5px] text-[#45709f]">
        <Maximize className="h-[20px] w-[20px]" strokeWidth={2} />
      </div>
    </nav>
  );
}

const SHIPS: [string, number, boolean][] = [
  ["APL AUSTRIA", 76, true],
  ["DEEPSEA MATD...", 98, false],
  ["DLF BRIDGE", 70, false],
  ["GENOVA", 50, false],
  ["HEROIC STRIKER", 97, false],
];

function ShipsPanel() {
  return (
    <aside className="h-full w-[214.500px] shrink-0 border-r border-[#8fa5bd] bg-[rgba(18,70,127,0.78)] px-[8px] pt-[9px] font-[Lato,sans-serif] text-white">
      <Fit w={144} className="h-[35px] items-center text-[19.500px] font-semibold">
        Ships of Interest
      </Fit>
      <div className="mt-[10px] h-[196px] w-[195px] rounded-[2px] bg-[rgba(62,66,88,0.35)] shadow-[0_1px_2px_rgba(0,0,0,0.3)]">
        <div className="flex h-[51px] items-center pl-[8px]">
          <svg className="h-3 w-[14px] shrink-0" viewBox="0 0 14 12" fill="#fff">
            <path d="M0 12V7.500Q.5 4.500 4 2Q7.500 4.500 8 7.500V12zM6.500 1Q7.500 0 8.500 0Q13 3 13.500 11h-2.800Q10.500 4 6.500 1z" />
          </svg>
          <Fit w={89} className="ml-[12.500px] text-[12px] font-black">
            Individual Ships
          </Fit>
          <ChevronUp className="mb-[4px] ml-[54px] h-[12px] w-[12px]" strokeWidth={2.8} />
        </div>
        <div className="flex">
          <ul className="w-[179px] pt-[3px]">
            {SHIPS.map(([name, w, on]) => (
              <li key={name} className="flex h-[28.600px] items-center pl-[8px]">
                {on ? (
                  <svg className="mb-px h-[10px] w-[10px] shrink-0" viewBox="0 0 10 10">
                    <rect width="10" height="10" rx="1.5" fill="#2f80ed" />
                    <path d="M2 5.200l2 2L8 2.800" stroke="#fff" strokeWidth="1.5" fill="none" />
                  </svg>
                ) : (
                  <span className="mb-[2px] h-[10px] w-[10px] shrink-0 rounded-[1.500px] border border-[#8b8b8b] bg-white" />
                )}
                <span className="ml-[3px] w-[132.500px]">
                  <Fit w={w} className={on ? "text-[11.800px] font-black text-[#f3b84f]" : "text-[12.200px] font-bold text-[#e8eef5]"}>
                    {name}
                  </Fit>
                </span>
                <TrashGlyph />
              </li>
            ))}
          </ul>
          <div className="mt-[7px] h-[131px] w-[8px] rounded-full border border-[#2f6ea5]">
            <div className="h-[50px] rounded-full bg-[#2f6ea5]" />
          </div>
        </div>
      </div>
      <div className="mt-[27px] flex h-[38px] w-[195px] items-center rounded-[2px] bg-[rgba(62,66,88,0.35)] pt-px pl-[8px] shadow-[0_1px_2px_rgba(0,0,0,0.3)]">
        <svg className="h-3 w-3 shrink-0" viewBox="0 0 12 12">
          <path d="M2 0h4l1 1.500h3Q12 1.500 12 3.500v6.500Q12 12 10 12H2Q0 12 0 10V2Q0 0 2 0z" fill="#fff" />
          <path d="M3 9V6.500l2-2 1.500 2V9zM7 4.500q2.500 1.500 2.500 4.500H8z" fill="#3f5b80" />
        </svg>
        <Fit w={67} className="ml-[14px] text-[12px] font-black">
          Ship Groups
        </Fit>
        <svg className="ml-[41px] h-3 w-3 shrink-0" viewBox="0 0 12 12">
          <path d="M2 0h4l1 1.500h3Q12 1.500 12 3.500v6.500Q12 12 10 12H2Q0 12 0 10V2Q0 0 2 0z" fill="#fff" />
          <path d="M6 4v5M3.500 6.500h5" stroke="#3f5b80" strokeWidth="1.4" />
        </svg>
        <ChevronDown className="mt-[2px] ml-[24px] h-[12px] w-[12px]" strokeWidth={2.8} />
      </div>
    </aside>
  );
}

function MapTools() {
  const box = "flex h-[31px] w-[31px] items-center justify-center rounded-[3px] bg-black text-[#3d6a9e]";
  return (
    <div className="flex flex-col gap-[1.300px]">
      <span className={box}>
        <svg className="h-[15px] w-[15px]" viewBox="0 0 15 15" stroke="currentColor" strokeWidth="1.3">
          <path d="M4.500 0v15M10.500 0v15M0 4.500h15M0 10.500h15" />
        </svg>
      </span>
      <span className={box}>
        <svg className="h-3 w-[14px]" viewBox="0 0 14 12" fill="currentColor">
          <path d="M0 1.500L3.800 0v10.500L0 12zM5 0l4 1.500V12l-4-1.500zM10.200 1.500L14 0v10.500L10.200 12z" />
        </svg>
      </span>
      <span className={box}>
        <ZoomIn className="mr-[2px] mb-[2px] h-[15px] w-[15px]" strokeWidth={2.3} />
      </span>
      <span className={box}>
        <ZoomOut className="mr-[2px] mb-[2px] h-[15px] w-[15px]" strokeWidth={2.3} />
      </span>
    </div>
  );
}

function BrowserWindow() {
  return (
    <div className="relative flex h-[817px] w-[1489px] flex-col overflow-hidden border-2 border-[#00b0f0] bg-white">
      <BrowserBar />
      <AppHeader />
      <div className="relative min-h-0 flex-1 overflow-hidden">
        <div className="absolute top-[-286px] left-[-110px]">
          <WorldMap />
        </div>
        <div className="relative flex h-full">
          <Rail />
          <ShipsPanel />
          <div className="flex min-w-0 flex-1 items-end pl-[61px]">
            <div className="mb-px">
              <AnomalyPanel />
            </div>
            <div className="mb-[15px] ml-[279.500px]">
              <MapTools />
            </div>
          </div>
          <div className="flex w-[12px] shrink-0 flex-col items-center bg-[#f1f1f1]">
            <div className="h-[657px] w-[10px] bg-[#c1c1c1]" />
            <svg className="mt-[12px] h-[4px] w-[6px]" viewBox="0 0 6 4">
              <path d="M0 0h6L3 4z" fill="#444" />
            </svg>
          </div>
        </div>
        <div className="absolute bottom-[2px] left-0 flex h-[16px] w-[156px] items-center rounded-tr-[3px] border-t border-r border-[#b7babf] bg-[#dee1e6] pl-[4px] font-['Open_Sans','Noto_Sans',sans-serif] text-[10px] text-[#50555a]">
          <Fit w={147}>https://navika.ai/#shiptypedeviation</Fit>
        </div>
        <div className="absolute bottom-0 left-0 h-px w-full bg-[#7d8797]" />
      </div>
    </div>
  );
}

/* ---------- enlarged view and annotations ---------- */

function Magnified() {
  return (
    <div className="relative h-[468px] w-[1206px] overflow-hidden border-2 border-[#00b0f0]">
      <div className="absolute top-[-838px] left-[-662px] h-[970px] w-[1613px] origin-top-left scale-[1.480]">
        <WorldMap />
        <div className="absolute top-[564px] left-[446px]">
          <AnomalyPanel />
        </div>
      </div>
    </div>
  );
}

function Callout({ className, children }: { className: string; children: ReactNode }) {
  return (
    <div
      className={`absolute flex flex-col justify-center border-4 bg-[#daeef3] font-[Lato,sans-serif] font-black text-black ${className}`}
    >
      {children}
    </div>
  );
}

function Arrows() {
  return (
    <svg className="pointer-events-none absolute top-0 left-0 h-[970px] w-[1613px]" viewBox="0 0 1613 970" fill="none">
      <defs>
        <linearGradient id="redH" x1="0" x2="1" y1="0" y2="0">
          <stop offset="0" stopColor="#a52f2e" />
          <stop offset="1" stopColor="#cf3f3b" />
        </linearGradient>
        <linearGradient id="redV" x1="0" x2="0" y1="0" y2="1">
          <stop offset="0" stopColor="#cf3f3b" />
          <stop offset="1" stopColor="#a52f2e" />
        </linearGradient>
        <filter id="soft" x="-20%" y="-20%" width="140%" height="150%">
          <feDropShadow dx="0" dy="2.5" stdDeviation="1.8" floodOpacity="0.4" />
        </filter>
      </defs>
      <g stroke="#00b0f0" strokeWidth="5.6" strokeLinecap="round" strokeLinejoin="miter">
        <path d="M178 424C178 490 158 555 135 555C108 556 91 610 91 684" />
        <path d="M169 438L178 423L187 437M82 674L91 687L100 674" />
        <path d="M659 92C690 86 697 76 697 67C698 56 708 45 734 43" strokeWidth="5" />
        <path d="M674 82L658 92L675 100M720 35L735 43L722 52" strokeWidth="5" />
        <path d="M934 141C966 135 972 128 973 121C974 112 988 106 1009 105" strokeWidth="5" />
        <path d="M949 132L933 141.500L950 150M995 97L1010 105L997 114" strokeWidth="5" />
      </g>
      <g stroke="#c0504d" strokeWidth="5.6" filter="url(#soft)">
        <path d="M446 566L406 475M1253 567L1573 470" />
        <path d="M403 493L405 474L422 485M1553 465L1573 470L1559 484" strokeLinecap="round" />
      </g>
      <g stroke="#c0403d" strokeWidth="1.2" filter="url(#soft)">
        <path d="M797 204L816.500 184.500V193.500H848V214H816.500V223.500z" fill="url(#redV)" />
        <path d="M891 328.500L911 349H901.500V379H880.500V349H871z" fill="url(#redH)" />
        <path d="M1153.500 341.500L1173 361H1164V392.500H1143.500V361H1134z" fill="url(#redH)" />
      </g>
    </svg>
  );
}

export default function App() {
  return (
    <main className="relative h-[970px] w-[1613px] overflow-hidden bg-white">
      <div className="absolute top-[152px] left-[108px]">
        <BrowserWindow />
      </div>
      <div className="absolute top-[1px] left-[389px]">
        <Magnified />
      </div>

      <Callout className="top-[15px] left-[739px] h-[54px] w-[516px] rounded-[10px] border-[#00b0f0] pl-[15.500px] text-[20px]">
        <Fit w={473}>Anomaly Info panel active indication in colour Amber</Fit>
      </Callout>
      <Callout className="top-[77px] left-[1013px] h-[54px] w-[292px] rounded-[10px] border-[#00b0f0] pt-[3px] pl-[16px] text-[17px]">
        <Fit w={241}>Click on the Ship type Deviation</Fit>
      </Callout>
      <Callout className="top-[176px] left-[864px] h-[54px] w-[229px] rounded-[10px] border-[#00b0f0] pt-[3px] pl-[16px] text-[16.500px] leading-[22px]">
        <Fit w={165}>Ship Declared Type as</Fit>
        <Fit w={123}>per the AIS Data</Fit>
      </Callout>
      <Callout className="top-[377px] left-[701px] h-[54px] w-[242px] rounded-[10px] border-[#00b0f0] pt-[3px] pl-[15.500px] text-[17px]">
        <Fit w={199}>Ship Trajectory illustration</Fit>
      </Callout>
      <Callout className="top-[390px] left-[1026px] h-[54px] w-[192px] rounded-[10px] border-[#00b0f0] pt-[3px] pl-[16px] text-[17px]">
        <Fit w={145}>Ship Type Anomaly</Fit>
      </Callout>
      <Callout className="top-[690px] left-[1px] h-[104px] w-[417px] rounded-[18px] border-[#4f81bd] pt-[1px] pl-[18.500px] text-[20px] leading-[26.700px]">
        <Fit w={356}>Select the individual ships, based on the</Fit>
        <Fit w={359}>selection of the Deviation, Anomaly Info</Fit>
        <Fit w={159}>panel is displayed</Fit>
      </Callout>
      <Arrows />
    </main>
  );
}
